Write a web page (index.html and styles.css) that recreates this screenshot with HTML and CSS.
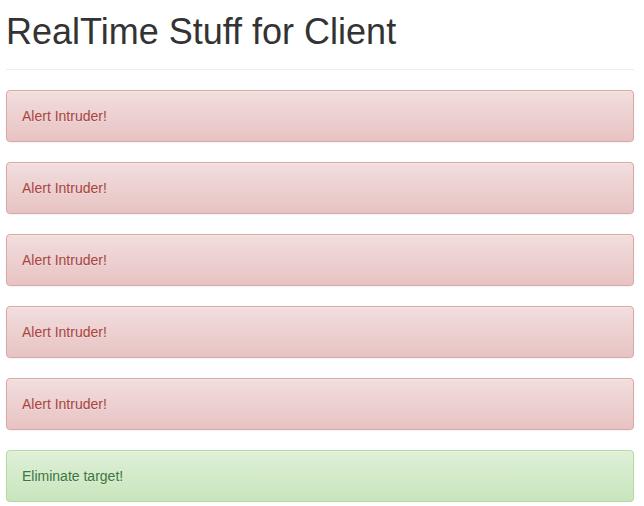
FILE: index.html
```html
<!DOCTYPE html>
<html>
<head>
<meta charset="utf-8">
<title>RealTime Stuff for Client</title>
<link rel="stylesheet" href="styles.css">
</head>
<body>
<div class="page">
  <div class="page-header">
    <h1>RealTime Stuff for Client</h1>
  </div>
  <div class="alerts">
    <div class="alert alert-danger">Alert Intruder!</div>
    <div class="alert alert-danger">Alert Intruder!</div>
    <div class="alert alert-danger">Alert Intruder!</div>
    <div class="alert alert-danger">Alert Intruder!</div>
    <div class="alert alert-danger">Alert Intruder!</div>
    <div class="alert alert-success">Eliminate target!</div>
  </div>
</div>
</body>
</html>
```
FILE: styles.css
```css
html, body {
  margin: 0;
  padding: 0;
  background: #fff;
}
body {
  font-family: "Liberation Sans", Arial, sans-serif;
  font-size: 14px;
  line-height: 20px;
  color: #333;
}
.page {
  padding: 0 10px 0 6px;
}
.page-header {
  padding-bottom: 8px;
  border-bottom: 1px solid #eee;
}
.page-header h1 {
  margin: 12px 0 9px;
  font-size: 36px;
  font-weight: 500;
  line-height: 40px;
  color: #333;
}
.alerts {
  display: flex;
  flex-direction: column;
  gap: 20px;
  padding-top: 20px;
}
.alert {
  padding: 15px;
  border: 1px solid transparent;
  border-radius: 4px;
  text-shadow: 0 1px 0 rgba(255,255,255,.2);
  box-shadow: inset 0 1px 0 rgba(255,255,255,.25), 0 1px 2px rgba(0,0,0,.05);
}
.alert-danger {
  color: #a94442;
  background-color: #f2dede;
  background-image: linear-gradient(to bottom, #f2dede 0, #e7c3c3 100%);
  border-color: #dca7a7;
}
.alert-success {
  color: #3c763d;
  background-color: #dff0d8;
  background-image: linear-gradient(to bottom, #dff0d8 0, #c8e5bc 100%);
  border-color: #b2dba1;
}
```
